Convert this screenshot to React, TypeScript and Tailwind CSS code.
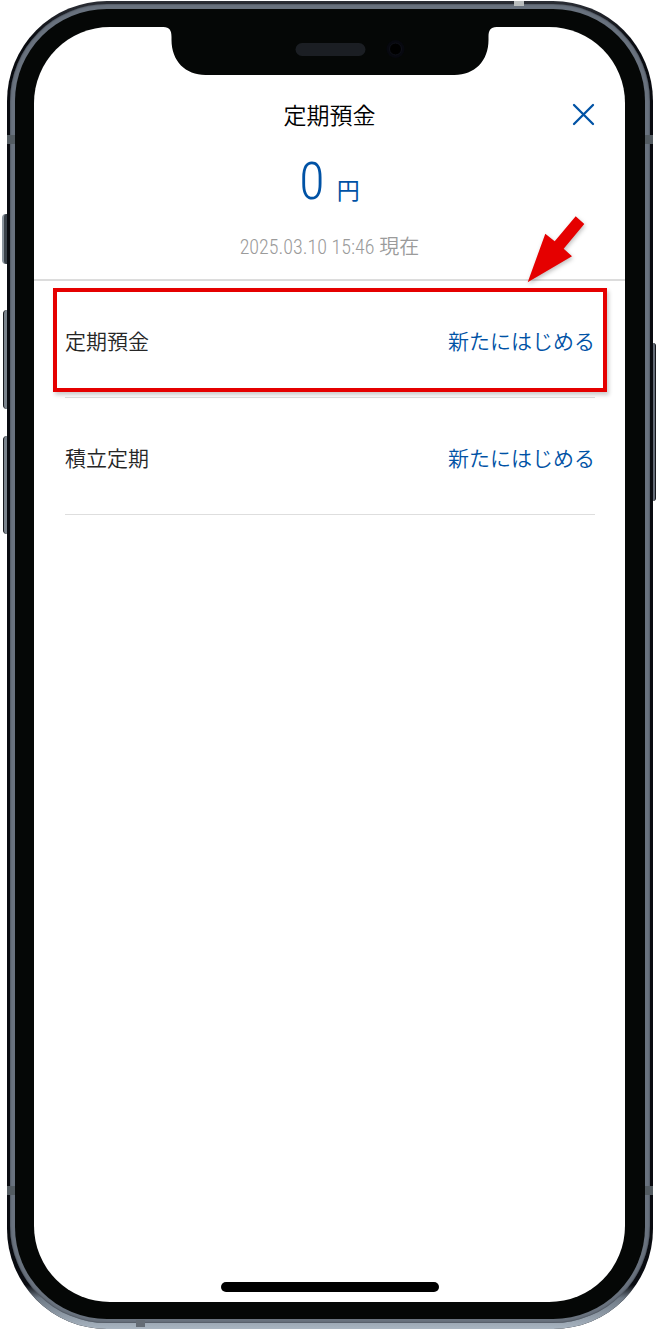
import React from 'react'

type Product = {
    id: string;
    name: string;
    action: string;
    highlighted: boolean;
};

const products: Product[] = [
    { id: 'teiki', name: '定期預金', action: '新たにはじめる', highlighted: true },
    { id: 'tsumitate', name: '積立定期', action: '新たにはじめる', highlighted: false },
];

function Notch() {
    return (
        <svg className="absolute top-0 left-1/2 -translate-x-1/2" width="333" height="49" viewBox="0 0 333 49" fill="none" aria-hidden="true">
            <path d="M0 0H333C327 .5 325 3 325 10V13C325 34 311 48 291 48H42C22 48 8 34 8 13V10C8 3 6 .5 0 0Z" fill="#050706" />
            <rect x="132" y="16" width="70" height="13" rx="6.5" fill="#1b1e23" />
            <circle cx="232" cy="22" r="9" fill="#07080f" />
            <circle cx="232" cy="22" r="6" fill="#000" stroke="#0f1119" />
        </svg>
    );
}

// red arrow that points at the highlighted row
function Arrow() {
    return (
        <svg className="absolute -top-[66px] right-10 drop-shadow-[1px_2px_2px_rgba(0,0,0,0.25)]" width="58" height="68" viewBox="527 214 58 68" aria-hidden="true">
            <path d="M527.7 281.3L545.3 232.7L554.7 240.3L575.7 215.3L584.3 223L563.7 247.7L572 255.3Z" fill="#e50000" />
        </svg>
    );
}

function Highlight() {
    return (
        <div className="pointer-events-none absolute -inset-x-3 top-[7px] bottom-[5px] border-4 border-[#e50000] shadow-[2px_3px_4px_rgba(0,0,0,0.2)]"></div>
    );
}

function ProductRow({ data }: { data: Product }) {
    return (
        <li className="relative flex h-[117px] items-center justify-between border-b border-[#dedede] pt-0.5 text-[21px] leading-8 font-[350]">
            <h2 className="text-[#262626]">{data.name}</h2>
            <a href={`#${data.id}`} className="text-[#0052a5]">{data.action}</a>
            {data.highlighted && <Highlight />}
        </li>
    );
}

function PhoneFrame({ children }: { children: React.ReactNode }) {
    return (
        <div className="relative flex min-h-screen flex-col bg-white pt-px pr-1 pb-px pl-[7px]">
            {/* side buttons */}
            <span className="absolute top-[214px] left-[2px] h-[50px] w-[5px] rounded-l-sm border-l-2 border-[#8b959e] bg-[#3a424a]"></span>
            <span className="absolute top-[310px] left-[3px] h-[99px] w-1 rounded-l-sm border-l border-[#15181d] bg-[#7a838c]"></span>
            <span className="absolute top-[436px] left-[3px] h-[98px] w-1 rounded-l-sm border-l border-[#15181d] bg-[#7a838c]"></span>
            <span className="absolute top-[343px] right-px h-[158px] w-[3px] rounded-r-sm border-r border-[#15181d] bg-[#656c77]"></span>

            <div className="relative flex grow flex-col overflow-hidden rounded-[100px] bg-linear-to-b from-[#2b2e35] via-[#090b10] via-3% to-[#090b10] px-[3px] pt-[3px]">
                <div className="absolute inset-x-0 bottom-0 h-11 bg-linear-to-b from-transparent via-[#6f7a86] via-30% to-[#a9b5c1]"></div>
                <div className="relative flex grow flex-col rounded-[97px] bg-[#69727e] px-[5px] pt-[5px] pb-1 inset-shadow-[0_0_2px_#2b3038]">
                    <div className="relative flex grow flex-col rounded-[92px] bg-[#050706] pt-[18px] pr-5 pb-[17px] pl-[19px]">
                        {children}
                    </div>
                </div>
                <div className="h-[6px]"></div>
                {/* antenna lines */}
                <span className="absolute top-[134px] left-0 h-[9px] w-2 bg-[#535b61]"></span>
                <span className="absolute top-[134px] right-0 h-[9px] w-2 bg-[#535b61]"></span>
                <span className="absolute bottom-[134px] left-0 h-[9px] w-2 bg-[#535b61]"></span>
                <span className="absolute right-0 bottom-[134px] h-[9px] w-2 bg-[#535b61]"></span>
                <span className="absolute top-0 right-[129px] h-[5px] w-[10px] bg-[#b9bdbd]"></span>
                <span className="absolute bottom-[2px] left-[129px] h-[7px] w-[9px] bg-[#646c75]"></span>
            </div>
        </div>
    );
}

export default function App() {
    return (
        <PhoneFrame>
            <main className="relative flex grow flex-col overflow-hidden rounded-[76px] bg-white font-['Roboto','Noto_Sans_CJK_JP',sans-serif]">
                <Notch />

                <header className="border-b-2 border-[#dcdcdc] px-[30px] pt-[71px] pb-4 text-center">
                    <div className="grid grid-cols-[1fr_auto_1fr] items-center">
                        <h1 className="col-start-2 font-['Noto_Sans_CJK_JP',sans-serif] text-[23px] leading-8 font-[350] text-black">定期預金</h1>
                        <button type="button" aria-label="閉じる" className="justify-self-end text-[#0052a5]">
                            <svg width="23" height="23" viewBox="0 0 23 23" fill="none" stroke="currentColor" strokeWidth="2.3" strokeLinecap="round">
                                <path d="M2 2L21 21M21 2L2 21" />
                            </svg>
                        </button>
                    </div>
                    <p className="mt-5 flex items-baseline justify-center gap-3 text-[#0052a5]">
                        <span className="font-['Roboto_Condensed','Roboto',sans-serif] text-[52px] leading-16 font-light">0</span>
                        <span className="font-['Noto_Sans_CJK_JP',sans-serif] text-[23px]">円</span>
                    </p>
                    <p className="mt-4 text-xl leading-8 font-light text-[#9b9b9b]">
                        <time dateTime="2025-03-10T15:46" className="font-['Roboto_Condensed','Roboto',sans-serif]">2025.03.10 15:46</time>{' '}
                        <span className="font-['Noto_Sans_CJK_JP',sans-serif] font-[350]">現在</span>
                    </p>
                </header>

                <section className="relative pr-[30px] pl-[31px] font-['Noto_Sans_CJK_JP',sans-serif]">
                    <Arrow />
                    <ul>
                        {products.map((product) => (
                            <ProductRow key={product.id} data={product} />
                        ))}
                    </ul>
                </section>

                <div className="mx-auto mt-auto mb-[10px] h-[10px] w-[218px] rounded-full bg-black"></div>
            </main>
        </PhoneFrame>
    );
}
